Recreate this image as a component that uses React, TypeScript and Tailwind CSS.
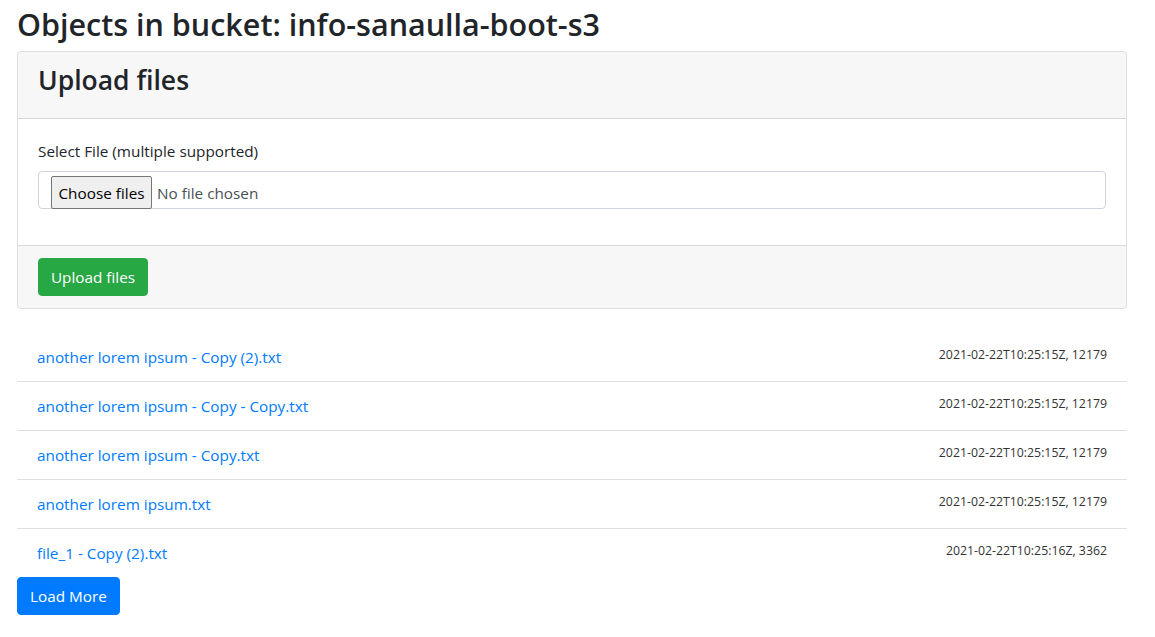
const FONT = "font-['Open_Sans','Noto_Sans',sans-serif]";

const OBJECTS = [
  { name: "another lorem ipsum - Copy (2).txt", meta: "2021-02-22T10:25:15Z, 12179" },
  { name: "another lorem ipsum - Copy - Copy.txt", meta: "2021-02-22T10:25:15Z, 12179" },
  { name: "another lorem ipsum - Copy.txt", meta: "2021-02-22T10:25:15Z, 12179" },
  { name: "another lorem ipsum.txt", meta: "2021-02-22T10:25:15Z, 12179" },
  { name: "file_1 - Copy (2).txt", meta: "2021-02-22T10:25:16Z, 3362" },
];

export default function App() {
  return (
    <div className={`${FONT} min-h-screen bg-white text-[#212529] text-[15.3px] leading-[24px]`}>
      <div className="w-[1110px] ml-[17px] pt-[5px]">
        <h2 className="text-[30.5px] font-semibold leading-[38.4px] mb-2">
          Objects in bucket: info-sanaulla-boot-s3
        </h2>

        {/* Upload card */}
        <div className="border border-black/[0.125] rounded-[4px] overflow-hidden">
          <div className="bg-black/[0.03] px-5 py-3 border-b border-black/[0.125]">
            <h3 className="text-[26.5px] font-semibold leading-[33.6px] mb-2">Upload files</h3>
          </div>
          <div className="p-5">
            <div className="mb-4">
              <label className="block mb-2">Select File (multiple supported)</label>
              <div className="flex items-center h-[38px] px-3 pt-[5px] border border-[#ced4da] rounded-[4px] text-[#495057]">
                <span className="h-[33px] w-[101px] flex items-center justify-center border border-[#767676] rounded-[2px] bg-[#efefef] text-black">
                  Choose files
                </span>
                <span className="ml-[5px]">No file chosen</span>
              </div>
            </div>
          </div>
          <div className="bg-black/[0.03] px-5 py-3 border-t border-black/[0.125]">
            <button className="h-[38px] w-[110px] bg-[#28a745] text-white rounded-[4px] border border-[#28a745]">
              Upload files
            </button>
          </div>
        </div>

        {/* Object list */}
        <ul className="mt-6">
          {OBJECTS.map((o, i) => (
            <li
              key={i}
              className={`flex justify-between items-start px-5 py-3 ${i < OBJECTS.length - 1 ? "border-b border-black/[0.125]" : ""}`}
            >
              <a href="#" className="text-[#007bff]">{o.name}</a>
              <small className="text-[12.3px] leading-[19.2px] text-[#333]">{o.meta}</small>
            </li>
          ))}
        </ul>
        <button className="h-[38px] w-[103px] bg-[#007bff] text-white rounded-[4px] border border-[#007bff]">
          Load More
        </button>
      </div>
    </div>
  );
}
